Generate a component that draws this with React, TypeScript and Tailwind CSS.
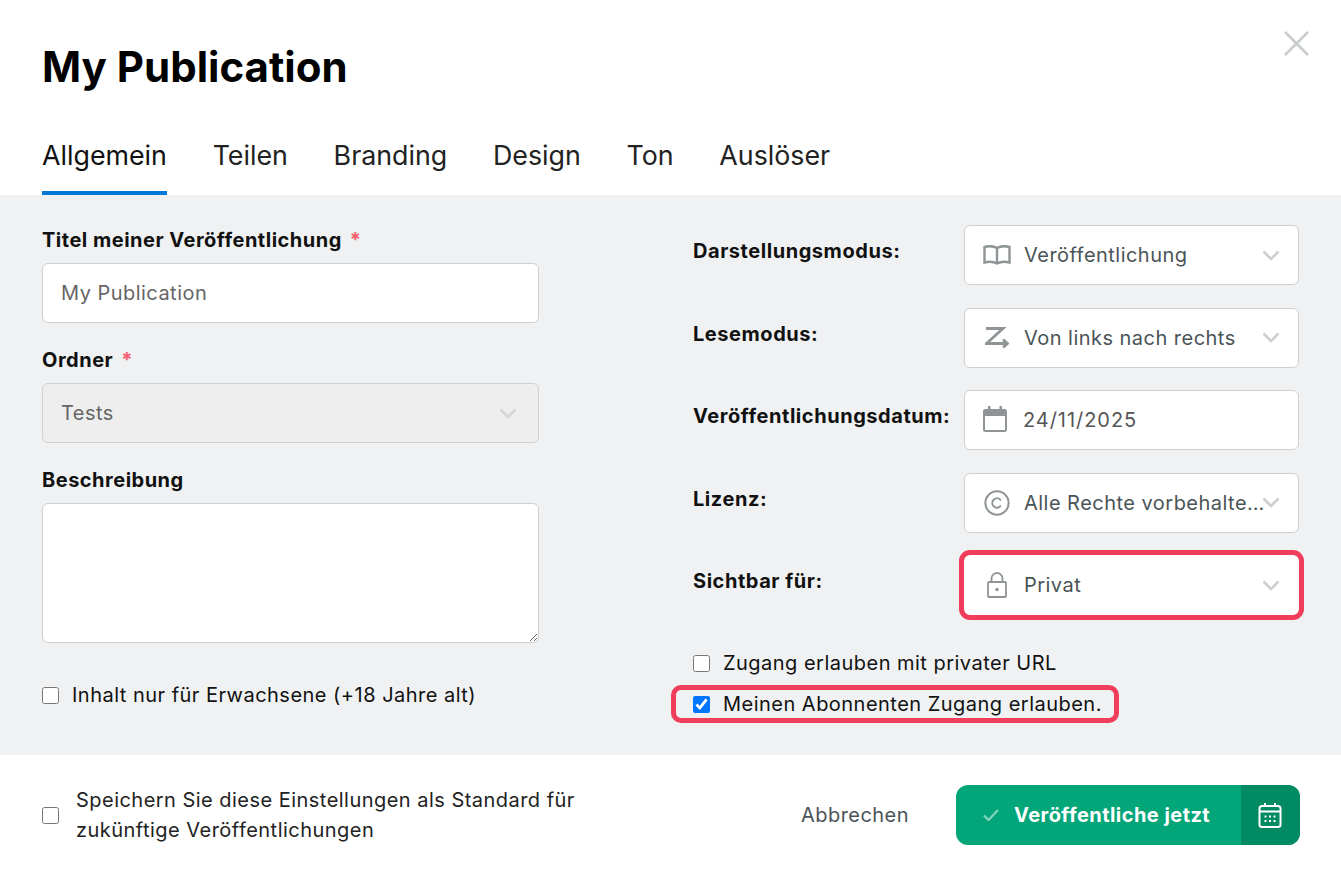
import { Copyright } from "lucide-react";
import type { ReactNode } from "react";

const tabs = ["Allgemein", "Teilen", "Branding", "Design", "Ton", "Auslöser"];

function Chevron({ light = false }: { light?: boolean }) {
  return (
    <svg width="18" height="11" viewBox="0 0 18 11" fill="none" className="shrink-0">
      <path
        d="M1.5 1.5 9 9l7.5-7.5"
        stroke={light ? "#d6d6d6" : "#cdcfcf"}
        strokeWidth="2.6"
      />
    </svg>
  );
}

function BookIcon() {
  return (
    <svg width="28" height="20" viewBox="0 0 28 20" fill="none" stroke="#8f9496" strokeWidth="2.4">
      <path d="M14 3C10.5 1 5 1 1.500 2v15.500c3.500-1 9-1 12.500 1 3.500-2 9-2 12.500-1V2C23 1 17.500 1 14 3Zm0 0v15.500" />
    </svg>
  );
}

function ZArrowIcon() {
  return (
    <svg width="24" height="22" viewBox="0 0 24 22" fill="none" stroke="#8f9496" strokeWidth="2.800">
      <path d="M1 1.500h17L1.500 16.500H22M18 12.500l4.500 4-4.500 4" />
    </svg>
  );
}

function CalendarIcon() {
  return (
    <svg width="24" height="26" viewBox="0 0 24 26" fill="none" className="-mt-[2px] -ml-[3px]">
      <rect x="1" y="4" width="22" height="21" rx="1.500" stroke="#8f9496" strokeWidth="2" />
      <path d="M1 4h22v6H1zM5 0h2.500v4H5zM16.500 0H19v4h-2.500z" fill="#8f9496" />
    </svg>
  );
}

function LockIcon() {
  return (
    <svg width="20" height="26" viewBox="0 0 20 26" fill="none" stroke="#8f9496" strokeWidth="1.800">
      <rect x="1" y="10" width="18" height="15" rx="1" />
      <path d="M4.500 10V6.500a5.500 5.500 0 0 1 11 0V10" />
      <circle cx="10" cy="17.500" r="1.700" fill="#8f9496" stroke="none" />
    </svg>
  );
}

function SplitCalendarIcon() {
  return (
    <svg width="24" height="25" viewBox="0 0 24 25" fill="none" stroke="#fff" strokeWidth="2">
      <rect x="1.500" y="3" width="21" height="21" rx="2.500" />
      <path d="M1.500 8.500h21M7 0v4M17 0v4" />
      <path
        d="M6.500 12.500h2v2h-2zM11 12.500h2v2h-2zM15.500 12.500h2v2h-2zM6.500 17h2v2h-2zM11 17h2v2h-2zM15.500 17h2v2h-2z"
        fill="#fff"
        stroke="none"
      />
    </svg>
  );
}

function Label({ children, required }: { children: ReactNode; required?: boolean }) {
  return (
    <div className="text-[20px] leading-[24px] font-bold tracking-[0.5px] text-[#111]">
      {children}
      {required && <span className="ml-2 text-[#f4606c]">*</span>}
    </div>
  );
}

function SettingRow({
  label,
  icon,
  value,
  chevron = true,
  highlight = false,
  date = false,
}: {
  label: string;
  icon: ReactNode;
  value: string;
  chevron?: boolean;
  highlight?: boolean;
  date?: boolean;
}) {
  return (
    <div className="flex items-center">
      <div className="w-[271px] pb-2 text-[20px] leading-[24px] font-bold tracking-[0.55px] text-[#111]">
        {label}
      </div>
      <div
        className={
          highlight
            ? "flex h-[60px] w-[335px] items-center rounded-[6px] bg-white pr-[19px] outline-[5px] outline-[#f03d5b] [outline-style:solid]"
            : "flex h-[60px] w-[335px] items-center rounded-[6px] border border-[#cfd0d2] bg-white pr-[18px]"
        }
      >
        <div className={highlight ? "flex w-[60px] shrink-0 justify-center pl-[6px]" : "flex w-[59px] shrink-0 justify-center pl-[4px]"}>
          {icon}
        </div>
        <span
          className={
            date
              ? "-ml-px min-w-0 flex-1 text-[20px] tracking-[0.95px] text-[#555]"
              : "-mr-[4px] min-w-0 flex-1 text-[20px] whitespace-nowrap tracking-[0.47px] text-[#4a5457]"
          }
        >
          {value}
        </span>
        {chevron && <Chevron />}
      </div>
    </div>
  );
}

function CheckRow({ label, checked = false }: { label: string; checked?: boolean }) {
  return (
    <label className="flex items-center gap-[13px] text-[20px] leading-[30px] tracking-[0.48px] text-[#111]">
      <input type="checkbox" defaultChecked={checked} className="m-0 h-[17px] w-[17px] shrink-0" />
      <span>{label}</span>
    </label>
  );
}

export default function App() {
  return (
    <div className="relative flex h-[877px] w-[1341px] flex-col overflow-hidden bg-white font-['Inter',sans-serif] [font-optical-sizing:none]">
      <button className="absolute top-[31px] left-[1284px]">
        <svg width="25" height="25" viewBox="0 0 25 25" stroke="#c9cccc" strokeWidth="2.600" fill="none">
          <path d="M1 1l23 23M24 1 1 24" />
        </svg>
      </button>

      <header className="h-[195px] shrink-0 px-[42px] pt-[38px]">
        <h1 className="text-[42px] leading-[58px] font-bold text-black">My Publication</h1>
        <nav className="mt-[25px] flex gap-[45.7px]">
          {tabs.map((tab, i) => (
            <div
              key={tab}
              className={
                i === 0
                  ? "h-[74px] border-b-4 border-[#0078d4] pt-[17px] text-[26.8px] leading-[34px] text-[#111]"
                  : "h-[74px] pt-[17px] text-[26.8px] leading-[34px] text-[#222]"
              }
            >
              {tab}
            </div>
          ))}
        </nav>
      </header>

      <main className="flex h-[560px] shrink-0 bg-[#f0f1f3] pl-[42px]">
        <section className="flex w-[497px] flex-col pt-[33px]">
          <Label required>Titel meiner Veröffentlichung</Label>
          <input
            readOnly
            value="My Publication"
            className="mt-[11px] h-[60px] rounded-[6px] border border-[#cfd0d2] bg-white px-[18px] text-[20px] tracking-[0.47px] text-[#666] outline-none"
          />
          <div className="mt-[25px]">
            <Label required>Ordner</Label>
          </div>
          <div className="mt-[11px] flex h-[60px] items-center justify-between rounded-[6px] border border-[#cfd0d2] bg-[#eeeeee] pr-[21px] pl-[18px] text-[20px] tracking-[0.47px] text-[#666]">
            <span>Tests</span>
            <Chevron light />
          </div>
          <div className="mt-[25px]">
            <Label>Beschreibung</Label>
          </div>
          <textarea className="mt-[11px] h-[140px] rounded-[6px] border border-[#cfd0d2] bg-white outline-none" />
          <div className="mt-[37px]">
            <CheckRow label="Inhalt nur für Erwachsene (+18 Jahre alt)" />
          </div>
        </section>

        <section className="ml-[154px] flex w-[606px] flex-col pt-[30px]">
          <div className="flex flex-col gap-[22.5px]">
            <SettingRow label="Darstellungsmodus:" icon={<BookIcon />} value="Veröffentlichung" />
            <SettingRow label="Lesemodus:" icon={<ZArrowIcon />} value="Von links nach rechts" />
            <SettingRow
              label="Veröffentlichungsdatum:"
              icon={<CalendarIcon />}
              value="24/11/2025"
              chevron={false}
              date
            />
            <SettingRow
              label="Lizenz:"
              icon={<Copyright size={28} color="#8f9496" strokeWidth={1.7} />}
              value="Alle Rechte vorbehalte…"
            />
            <SettingRow label="Sichtbar für:" icon={<LockIcon />} value="Privat" highlight />
          </div>
          <div className="mt-[33px]">
            <CheckRow label="Zugang erlauben mit privater URL" />
          </div>
          <div className="relative mt-[11px]">
            <div className="absolute top-[-4px] left-[-22px] h-[38px] w-[448px] rounded-[10px] border-[5px] border-[#f03d5b]" />
            <CheckRow label="Meinen Abonnenten Zugang erlauben." checked />
          </div>
        </section>
      </main>

      <footer className="flex flex-1 items-center pr-[41px] pb-[2px] pl-[42px]">
        <div className="flex w-[759px] items-center gap-[17px]">
          <input type="checkbox" className="m-0 h-[17px] w-[17px] shrink-0" />
          <span className="text-[20px] leading-[30px] tracking-[0.47px] text-[#222]">
            Speichern Sie diese Einstellungen als Standard für
            <br />
            zukünftige Veröffentlichungen
          </span>
        </div>
        <span className="text-[20px] tracking-[0.45px] text-[#4a5457]">Abbrechen</span>
        <div className="ml-auto flex h-[60px] w-[344px] overflow-hidden rounded-[12px] bg-[#03a678]">
          <div className="flex flex-1 items-center gap-[15px] pl-[27px] text-[20px] font-bold tracking-[0.45px] text-white">
            <svg width="16" height="12" viewBox="0 0 16 12" fill="none" stroke="#7fd3bb" strokeWidth="2.400">
              <path d="M1 6.500 5.500 11 15 1" />
            </svg>
            Veröffentliche jetzt
          </div>
          <div className="flex w-[59px] items-center justify-center bg-[#028a63] pr-[2px]">
            <SplitCalendarIcon />
          </div>
        </div>
      </footer>
    </div>
  );
}
